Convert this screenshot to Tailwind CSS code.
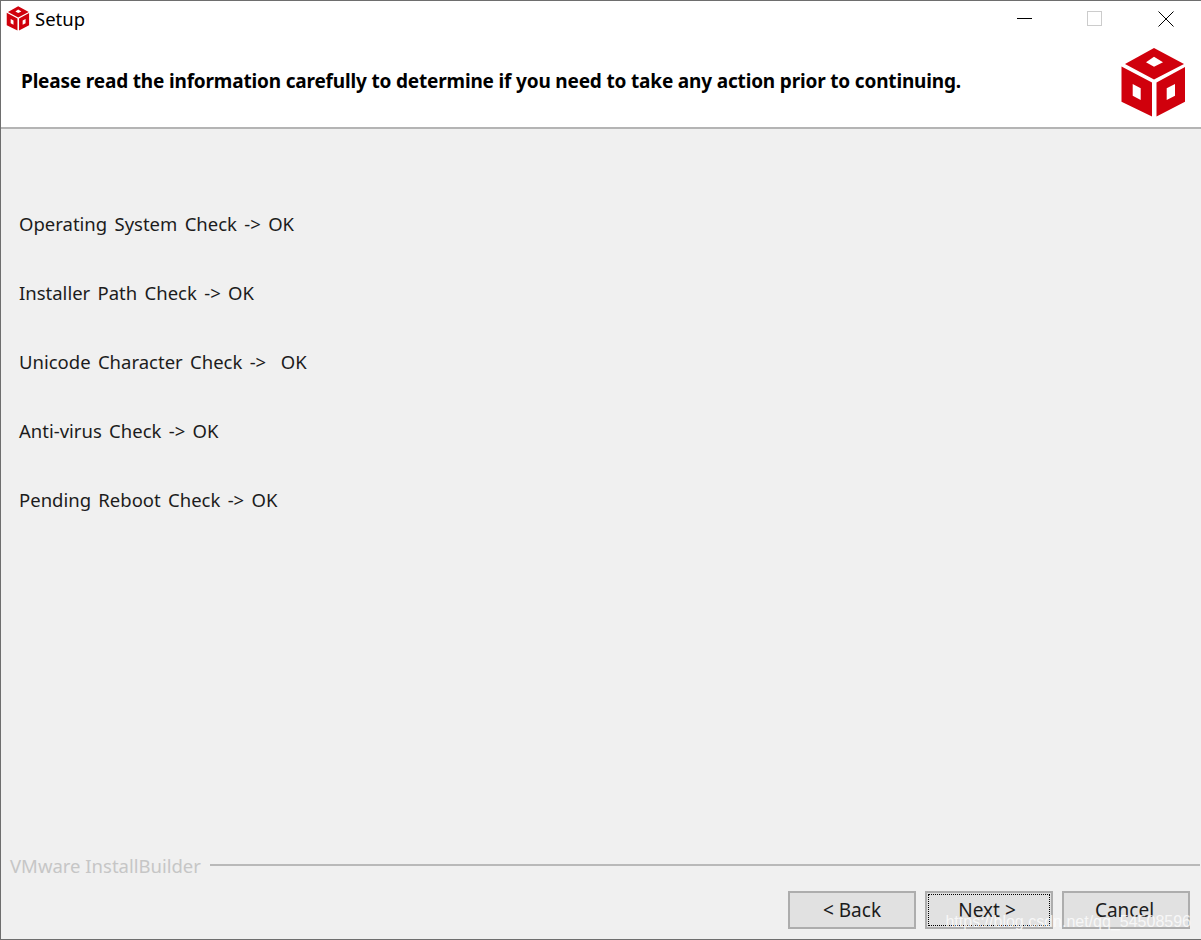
<!DOCTYPE html>
<html lang="en">
<head>
  <meta charset="UTF-8">
  <title>Setup</title>
  <script src="https://cdn.jsdelivr.net/npm/@tailwindcss/browser@4"></script>
</head>
<body class="w-[1201px] h-[940px] overflow-hidden bg-[#f0f0f0] font-['Noto_Sans',sans-serif]">
  <div class="relative flex flex-col h-[940px] border-t border-l border-b border-[#6e6e6e]">
    <!-- title bar -->
    <div class="flex items-center h-[35px] bg-white">
      <svg class="ml-[5px] w-[24px] h-[25px]" viewBox="0 0 67 71" fill="#d0000c">
        <path fill-rule="evenodd" d="M34 1 64 17 34 32.500 5 17ZM34 9.700 26 15.300 34 19.700 43 15.300Z"/>
        <path fill-rule="evenodd" d="M1.500 19.500 32 35.500V69.500L1.500 54.700ZM12.700 37V48.700L20.700 53V41.300Z"/>
        <path fill-rule="evenodd" d="M36.500 35.500 65 20V54.700L36.500 69.500ZM46.700 41.300V53L55 48.700V37Z"/>
      </svg>
      <span class="ml-[5px] text-[18.500px] text-black">Setup</span>
      <div class="ml-auto flex items-center">
        <div class="w-[15px] h-px bg-black mr-[55px] mb-[1px]"></div>
        <div class="w-[15px] h-[15px] border border-[#cccccc] mr-[56px]"></div>
        <svg class="w-[16px] h-[16px] mr-[27px]" viewBox="0 0 16 16" stroke="#000" fill="none"><path d="M.5.500 15.500 15.500M15.500.500.500 15.500"/></svg>
      </div>
    </div>
    <!-- header -->
    <div class="flex items-center justify-between h-[93px] bg-white border-b-2 border-[#b4b4b4]">
      <h1 class="ml-[20px] text-[19px] tracking-[-0.17px] leading-none font-bold text-black">Please read the information carefully to determine if you need to take any action prior to continuing.</h1>
      <svg class="mr-[14px] mb-[-2px] w-[67px] h-[71px]" viewBox="0 0 67 71" fill="#d0000c">
        <path fill-rule="evenodd" d="M34 1 64 17 34 32.500 5 17ZM34 9.700 26 15.300 34 19.700 43 15.300Z"/>
        <path fill-rule="evenodd" d="M1.500 19.500 32 35.500V69.500L1.500 54.700ZM12.700 37V48.700L20.700 53V41.300Z"/>
        <path fill-rule="evenodd" d="M36.500 35.500 65 20V54.700L36.500 69.500ZM46.700 41.300V53L55 48.700V37Z"/>
      </svg>
    </div>
    <!-- checks -->
    <div class="flex-1 flex flex-col gap-[45px] pt-[83px] pl-[18px] text-[18.500px] [word-spacing:2.500px] leading-[24px] text-[#1c1c1c]">
      <p>Operating System Check -&gt; OK</p>
      <p>Installer Path Check -&gt; OK</p>
      <p class="whitespace-pre">Unicode Character Check -&gt;  OK</p>
      <p>Anti-virus Check -&gt; OK</p>
      <p>Pending Reboot Check -&gt; OK</p>
    </div>
    <!-- branding line -->
    <div class="flex items-center pl-[9px] pr-[1px] h-[24px] mb-[13px]">
      <span class="text-[18.500px] text-[#c6c6c6] leading-none mt-[1px]">VMware InstallBuilder</span>
      <div class="flex-1 ml-[9px] h-[2px] mb-[2px] bg-[#b9b9b9]"></div>
    </div>
    <!-- buttons -->
    <div class="flex justify-end gap-[9px] pr-[11px] pb-[10px] text-[19px] text-[#1c1c1c]">
      <button class="w-[128px] h-[38px] bg-[#e1e1e1] border-2 border-[#adadad] leading-none">&lt; Back</button>
      <button class="w-[128px] h-[38px] bg-[#e1e1e1] border-2 border-[#adadad] leading-none p-px"><span class="flex items-center justify-center h-full pr-[4px] border border-dotted border-black">Next &gt;</span></button>
      <button class="w-[128px] h-[38px] bg-[#e1e1e1] border-2 border-[#adadad] leading-none pr-[3px]">Cancel</button>
    </div>
    <!-- image watermark -->
    <span class="absolute right-[10px] bottom-[9px] text-[16px] leading-none text-white/75 font-['Liberation_Sans',sans-serif]">https://blog.csdn.net/qq_54508596</span>
  </div>
</body>
</html>
